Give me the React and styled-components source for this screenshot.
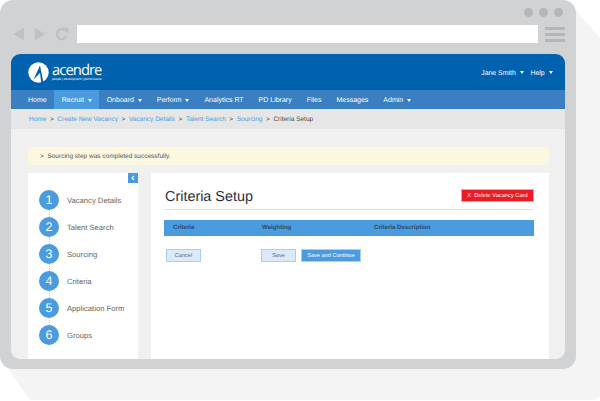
import React from 'react';
import styled, { createGlobalStyle } from 'styled-components';

const Global = createGlobalStyle`
  html, body { margin: 0; padding: 0; background: #fff; }
  body {
    width: 600px;
    height: 401px;
    overflow: hidden;
    font-family: "Liberation Sans", Arial, sans-serif;
    text-rendering: geometricPrecision;
  }
  * { box-sizing: border-box; }
  button { text-rendering: geometricPrecision; }
`;

const Page = styled.div`
  position: relative;
  width: 600px;
  height: 401px;
`;
const Shadow = styled.svg`
  position: absolute;
  left: 0;
  top: 0;
`;
const Frame = styled.div`
  position: relative;
  width: 576px;
  height: 369px;
  background: #d1d2d4;
  border-radius: 13px;
  padding: 0 11px 10px;
  display: flex;
  flex-direction: column;
`;
const Dots = styled.div`
  height: 25px;
  display: flex;
  justify-content: flex-end;
  align-items: center;
  gap: 6.4px;
  padding-right: 1.7px;
`;
const Dot = styled.span`
  width: 9px;
  height: 9px;
  border-radius: 50%;
  background: #b5b6b8;
`;
const Toolbar = styled.div`
  height: 18px;
  margin-bottom: 11px;
  display: flex;
  align-items: center;
`;
const UrlBar = styled.div`
  width: 461px;
  height: 18px;
  margin-left: 1px;
  background: #fff;
`;
const NavIcons = styled.svg`
  width: 65px;
  height: 18px;
  flex: none;
`;
const Burger = styled.div`
  margin-left: 7px;
  width: 20px;
  display: flex;
  flex-direction: column;
  gap: 3px;
`;
const BurgerLine = styled.span`
  height: 3px;
  background: #b5b6b8;
`;
const Window = styled.div`
  flex: 1;
  background: #f0f0f0;
  border-radius: 9px;
  overflow: hidden;
  display: flex;
  flex-direction: column;
`;
const Header = styled.div`
  height: 36px;
  background: #0061af;
  display: flex;
  align-items: center;
  justify-content: space-between;
  padding: 0 12.5px 0 17px;
  color: #fff;
`;
const Logo = styled.div`
  display: flex;
  align-items: center;
  gap: 3px;
`;
const LogoText = styled.div`
  display: flex;
  flex-direction: column;
  color: #fff;
`;
const LogoName = styled.span`
  font-family: "Open Sans", sans-serif;
  font-size: 14.8px;
  line-height: 13px;
  letter-spacing: -0.95px;
`;
const LogoTag = styled.span`
  font-size: 3.1px;
  line-height: 4px;
  white-space: nowrap;
`;
const UserMenu = styled.div`
  display: flex;
  gap: 7px;
  font-size: 6.9px;
  margin-top: 2.6px;
`;
const Caret = styled.span`
  display: inline-block;
  width: 0;
  height: 0;
  margin-left: 3.8px;
  vertical-align: 1px;
  border-left: 2.8px solid transparent;
  border-right: 2.8px solid transparent;
  border-top: 3px solid #fff;
`;
const UserItem = styled.span`
  white-space: nowrap;
`;
const Nav = styled.nav`
  height: 19px;
  background: #3a7fc1;
  display: flex;
  padding-left: 9.5px;
`;
const NavItem = styled.a`
  display: flex;
  align-items: center;
  white-space: nowrap;
  padding: 1px 7.5px 0;
  font-size: 7px;
  color: #fff;
  background: ${p => (p.$active ? '#4a9be0' : 'transparent')};
`;
const Crumbs = styled.div`
  height: 20px;
  background: #e6e6e6;
  display: flex;
  align-items: center;
  padding-left: 18px;
  font-size: 6.5px;
  color: #4a4a4a;
  white-space: nowrap;
`;
const Crumb = styled.a`
  color: #4a9be0;
`;
const Sep = styled.span`
  margin: 0 3.6px;
`;
const Content = styled.div`
  flex: 1;
  padding: 18px 16px 0 17px;
  display: flex;
  flex-direction: column;
`;
const Alert = styled.div`
  height: 18px;
  background: #fcf7e0;
  border-radius: 2px;
  display: flex;
  align-items: center;
  padding-left: 12px;
  font-size: 6.5px;
  color: #555;
  margin-bottom: 8px;
`;
const Columns = styled.div`
  flex: 1;
  display: flex;
  gap: 13px;
`;
const Sidebar = styled.aside`
  position: relative;
  width: 110px;
  background: #fff;
  padding-top: 17px;
`;
const Collapse = styled.button`
  position: absolute;
  top: 0;
  right: 0;
  width: 10px;
  height: 10px;
  padding: 0;
  border: 0;
  background: #4a9be0;
  color: #fff;
  display: flex;
  align-items: center;
  justify-content: center;
`;
const Steps = styled.ol`
  list-style: none;
  margin: 0;
  padding: 0 0 0 11px;
  display: flex;
  flex-direction: column;
  gap: 7px;
`;
const Step = styled.li`
  position: relative;
  display: flex;
  align-items: center;
  gap: 8px;
  height: 20px;
  font-size: 7.65px;
  color: #666;
  white-space: nowrap;
  &:not(:last-child)::after {
    content: '';
    position: absolute;
    left: 10px;
    top: 20px;
    height: 7px;
    border-left: 1px dotted #a9c9ea;
  }
`;
const StepNum = styled.span`
  width: 20px;
  height: 20px;
  border-radius: 50%;
  background: #4a9be0;
  color: #fff;
  font-size: 12.5px;
  display: flex;
  align-items: center;
  justify-content: center;
  flex: none;
`;
const Main = styled.main`
  flex: 1;
  background: #fff;
  padding: 0 15px 0 13px;
`;
const TitleRow = styled.div`
  height: 37px;
  display: flex;
  align-items: flex-start;
  justify-content: space-between;
  border-bottom: 1px solid #e2e2e2;
`;
const Title = styled.h1`
  margin: 14px 0 0 1px;
  font-weight: 400;
  font-size: 14.4px;
  line-height: 20px;
  color: #27313d;
`;
const DeleteBtn = styled.button`
  width: 73px;
  height: 13px;
  margin-top: 16px;
  padding: 0;
  border: 1px solid #f4a0a4;
  background: #ed1c24;
  color: #fff;
  font: 5.7px "Liberation Sans", sans-serif;
  white-space: nowrap;
`;
const TableHead = styled.div`
  height: 16.5px;
  margin-top: 9.5px;
  background: #4a9be0;
  display: grid;
  grid-template-columns: 89px 112px 1fr;
  align-items: center;
  padding-left: 9px;
  font-size: 6.1px;
  font-weight: 700;
  color: #2f4a68;
`;
const Actions = styled.div`
  display: flex;
  margin: 13px 0 0 2px;
`;
const Btn = styled.button`
  height: 13px;
  width: ${p => p.$w}px;
  margin-left: ${p => p.$gap || 0}px;
  padding: 0;
  font: 5.6px "Liberation Sans", sans-serif;
  white-space: nowrap;
  color: ${p => (p.$primary ? '#fff' : '#5b6b7c')};
  background: ${p => (p.$primary ? '#4a9be0' : '#dbe9f8')};
  border: 1px solid #a9cff2;
`;

const steps = ['Vacancy Details', 'Talent Search', 'Sourcing', 'Criteria', 'Application Form', 'Groups'];
const navItems = [
  ['Home'],
  ['Recruit', true, true],
  ['Onboard', true],
  ['Perform', true],
  ['Analytics RT'],
  ['PD Library'],
  ['Files'],
  ['Messages'],
  ['Admin', true],
];
const crumbs = ['Home', 'Create New Vacancy', 'Vacancy Details', 'Talent Search', 'Sourcing'];

export default function App() {
  return (
    <Page>
      <Global />
      <Shadow width="600" height="401" viewBox="0 0 600 401">
        <path d="M570 4 L600 38 L600 393 Q600 400 593 400 L34 400 Q30 400 27 396 L6 366 Z" fill="#f4f4f4" />
      </Shadow>
      <Frame>
        <Dots>
          <Dot /><Dot /><Dot />
        </Dots>
        <Toolbar>
          <NavIcons viewBox="0 0 65 18">
            <path d="M2.3 9 L13 2.7 V15.7 Z" fill="#c0c1c3" />
            <path d="M23.7 2.7 L34 9 L23.7 15.7 Z" fill="#c0c1c3" />
            <path d="M54.5 5.5 A5 5 0 1 0 55.5 11" fill="none" stroke="#c0c1c3" strokeWidth="2.6" />
            <path d="M51 3 H57.5 V9 Z" fill="#c0c1c3" />
          </NavIcons>
          <UrlBar />
          <Burger>
            <BurgerLine /><BurgerLine /><BurgerLine />
          </Burger>
        </Toolbar>
        <Window>
          <Header>
            <Logo>
              <svg width="21" height="21" viewBox="0 0 21 21">
                <circle cx="10.5" cy="10.5" r="10.2" fill="#fff" />
                <path d="M12 3.5 L5.5 17.5 L12 11 L13.3 21 L15.5 21 Z" fill="#0061af" />
              </svg>
              <LogoText>
                <LogoName>acendre</LogoName>
                <LogoTag>people | development | performance</LogoTag>
              </LogoText>
            </Logo>
            <UserMenu>
              <UserItem>Jane Smith<Caret /></UserItem>
              <UserItem>Help<Caret /></UserItem>
            </UserMenu>
          </Header>
          <Nav>
            {navItems.map(([label, caret, active]) => (
              <NavItem key={label} $active={active}>
                {label}
                {caret && <Caret />}
              </NavItem>
            ))}
          </Nav>
          <Crumbs>
            {crumbs.map(c => (
              <React.Fragment key={c}>
                <Crumb>{c}</Crumb>
                <Sep>&gt;</Sep>
              </React.Fragment>
            ))}
            <span>Criteria Setup</span>
          </Crumbs>
          <Content>
            <Alert>&gt;&nbsp; Sourcing step was completed successfully.</Alert>
            <Columns>
              <Sidebar>
                <Collapse aria-label="Collapse">
                  <svg width="6" height="6" viewBox="0 0 6 6">
                    <path d="M4 1 L2 3 L4 5" fill="none" stroke="#fff" strokeWidth="1.2" />
                  </svg>
                </Collapse>
                <Steps>
                  {steps.map((s, i) => (
                    <Step key={s}>
                      <StepNum>{i + 1}</StepNum>
                      {s}
                    </Step>
                  ))}
                </Steps>
              </Sidebar>
              <Main>
                <TitleRow>
                  <Title>Criteria Setup</Title>
                  <DeleteBtn>X&nbsp; Delete Vacancy Card</DeleteBtn>
                </TitleRow>
                <TableHead>
                  <span>Criteria</span>
                  <span>Weighting</span>
                  <span>Criteria Description</span>
                </TableHead>
                <Actions>
                  <Btn $w={35}>Cancel</Btn>
                  <Btn $w={35} $gap={60}>Save</Btn>
                  <Btn $w={60} $gap={5} $primary>Save and Continue</Btn>
                </Actions>
              </Main>
            </Columns>
          </Content>
        </Window>
      </Frame>
    </Page>
  );
}
